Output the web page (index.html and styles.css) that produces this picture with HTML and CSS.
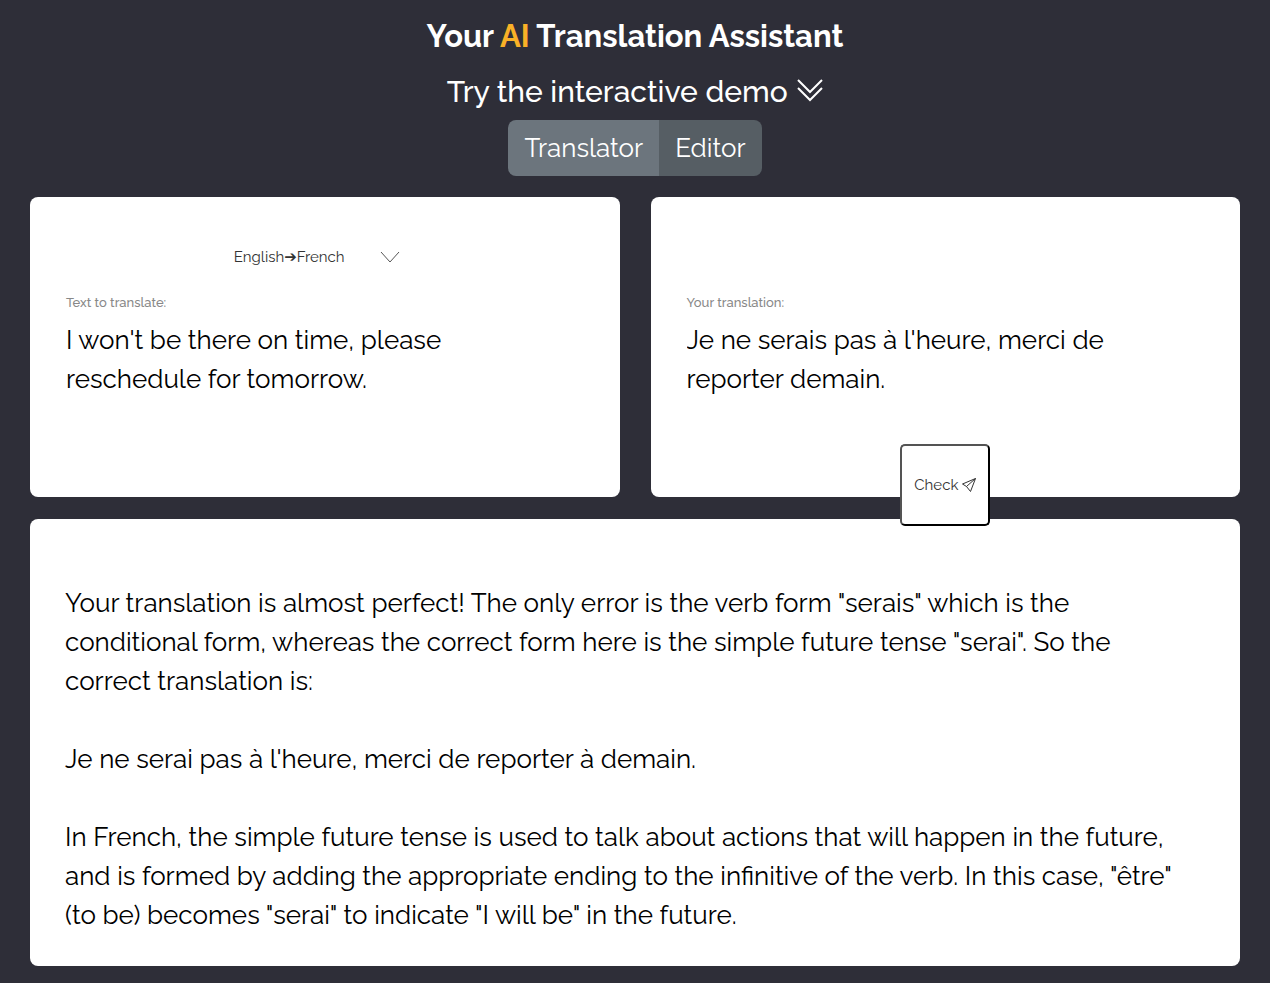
FILE: index.html
```
<!DOCTYPE html>
<html lang="en">
<head>
    <meta charset="UTF-8">
    <meta name="viewport" content="width=device-width, initial-scale=1.0">
    <title>Your AI Translation Assistant</title>
    <link rel="stylesheet" href="styles.css">
</head>
<body>
    <header class="header">
        <h1>Your <span class="accent">AI</span> Translation Assistant</h1>
        <h2>Try the interactive demo
            <svg class="chevrons" viewBox="0 0 26 24" aria-hidden="true">
                <path d="M1 2l12 12L25 2M1 10l12 12 12-12"/>
            </svg>
        </h2>
        <div class="btn-group">
            <button type="button" class="btn">Translator</button>
            <button type="button" class="btn active">Editor</button>
        </div>
    </header>

    <main class="demo">
        <section class="card">
            <!-- Language pair -->
            <div class="language">
                <select class="language-select" aria-label="Languages">
                    <option>English➔French</option>
                </select>
                <svg class="arrow" viewBox="0 0 20 12" aria-hidden="true">
                    <path d="M1 1l9 10 9-10"/>
                </svg>
            </div>
            <label class="label" for="source">Text to translate:</label>
            <textarea id="source" class="text" rows="2" spellcheck="false">I won't be there on time, please
reschedule for tomorrow.</textarea>
        </section>

        <section class="card">
            <div class="language"></div>
            <label class="label" for="translation">Your translation:</label>
            <textarea id="translation" class="text" rows="2" spellcheck="false">Je ne serais pas à l'heure, merci de
reporter demain.</textarea>
            <button type="button" class="check">Check
                <svg class="send" viewBox="0 0 14 14" aria-hidden="true">
                    <path d="M13.5 .5L.5 6l4 2.500L8.500 13.500zM13.500 .5l-9 8"/>
                </svg>
            </button>
        </section>

        <!-- Feedback on the translation -->
        <section class="card result">
            <p>Your translation is almost perfect! The only error is the verb form "serais" which is the<br>
            conditional form, whereas the correct form here is the simple future tense "serai". So the<br>
            correct translation is:</p>
            <p>Je ne serai pas à l'heure, merci de reporter à demain.</p>
            <p>In French, the simple future tense is used to talk about actions that will happen in the future,<br>
            and is formed by adding the appropriate ending to the infinitive of the verb. In this case, "être"<br>
            (to be) becomes "serai" to indicate "I will be" in the future.</p>
        </section>
    </main>
</body>
</html>
```
FILE: styles.css
```
* {
    box-sizing: border-box;
}
body {
    margin: 0;
    background-color: #2e2e38;
    font-family: Raleway, Lato, "DejaVu Sans", sans-serif;
    color: #000;
}

/* Header */
.header {
    display: flex;
    flex-direction: column;
    align-items: center;
    padding-top: 16px;
    color: #fff;
}
h1, h2 {
    margin: 0;
    font-size: 31px;
    line-height: 40px;
}
h2 {
    margin-top: 16px;
    font-size: 30px;
    font-weight: 500;
}
.accent {
    color: #f9b127;
}
.chevrons {
    width: 26px;
    height: 24px;
    margin-left: 2px;
    fill: none;
    stroke: #fff;
    stroke-width: 2;
}
.btn-group {
    display: flex;
    margin-top: 8px;
    border-radius: 8px;
    overflow: hidden;
}
.btn {
    height: 56px;
    padding: 0 16px;
    border: 0;
    background-color: #6c757d;
    color: #fff;
    font-family: inherit;
    font-size: 26px;
    cursor: pointer;
}
.btn.active {
    background-color: #565e64;
}

/* Cards */
.demo {
    display: grid;
    grid-template-columns: 1fr 1fr;
    gap: 22px 31px;
    padding: 21px 30px 16px;
}
.card {
    position: relative;
    min-height: 300px;
    padding: 40px 36px 32px;
    background-color: #fff;
    border-radius: 8px;
}
.language {
    display: flex;
    align-items: center;
    justify-content: center;
    height: 40px;
    padding-right: 16px;
}
.language-select {
    width: 146px;
    padding: 0;
    border: 0;
    background: none;
    appearance: none;
    font-family: inherit;
    font-size: 15px;
    color: #333;
}
.arrow {
    width: 20px;
    height: 12px;
    fill: none;
    stroke: #555;
}
.label {
    display: block;
    margin-top: 16px;
    font-size: 13px;
    font-weight: 500;
    line-height: 20px;
    color: #888;
}
.text {
    display: block;
    width: 100%;
    margin-top: 8px;
    padding: 0;
    border: 0;
    outline: 0;
    resize: none;
    overflow: hidden;
    font-family: inherit;
    font-size: 26px;
    line-height: 39px;
    color: #000;
}

/* Sits over the bottom edge of the card */
.check {
    position: absolute;
    bottom: -29px;
    left: 50%;
    transform: translateX(-50%);
    width: 90px;
    height: 82px;
    padding: 0;
    border: 2px outset #000;
    border-radius: 5px;
    background-color: #fff;
    font-family: inherit;
    font-size: 15px;
    color: #333;
    white-space: nowrap;
    z-index: 1;
}
.send {
    width: 14px;
    height: 14px;
    fill: none;
    stroke: #333;
    stroke-linejoin: round;
    vertical-align: -2px;
}
.result {
    grid-column: 1 / -1;
    padding: 65px 35px 31px;
    font-size: 26px;
    line-height: 39px;
}
.result p {
    margin: 0 0 39px;
}
.result p:last-child {
    margin-bottom: 0;
}
```
